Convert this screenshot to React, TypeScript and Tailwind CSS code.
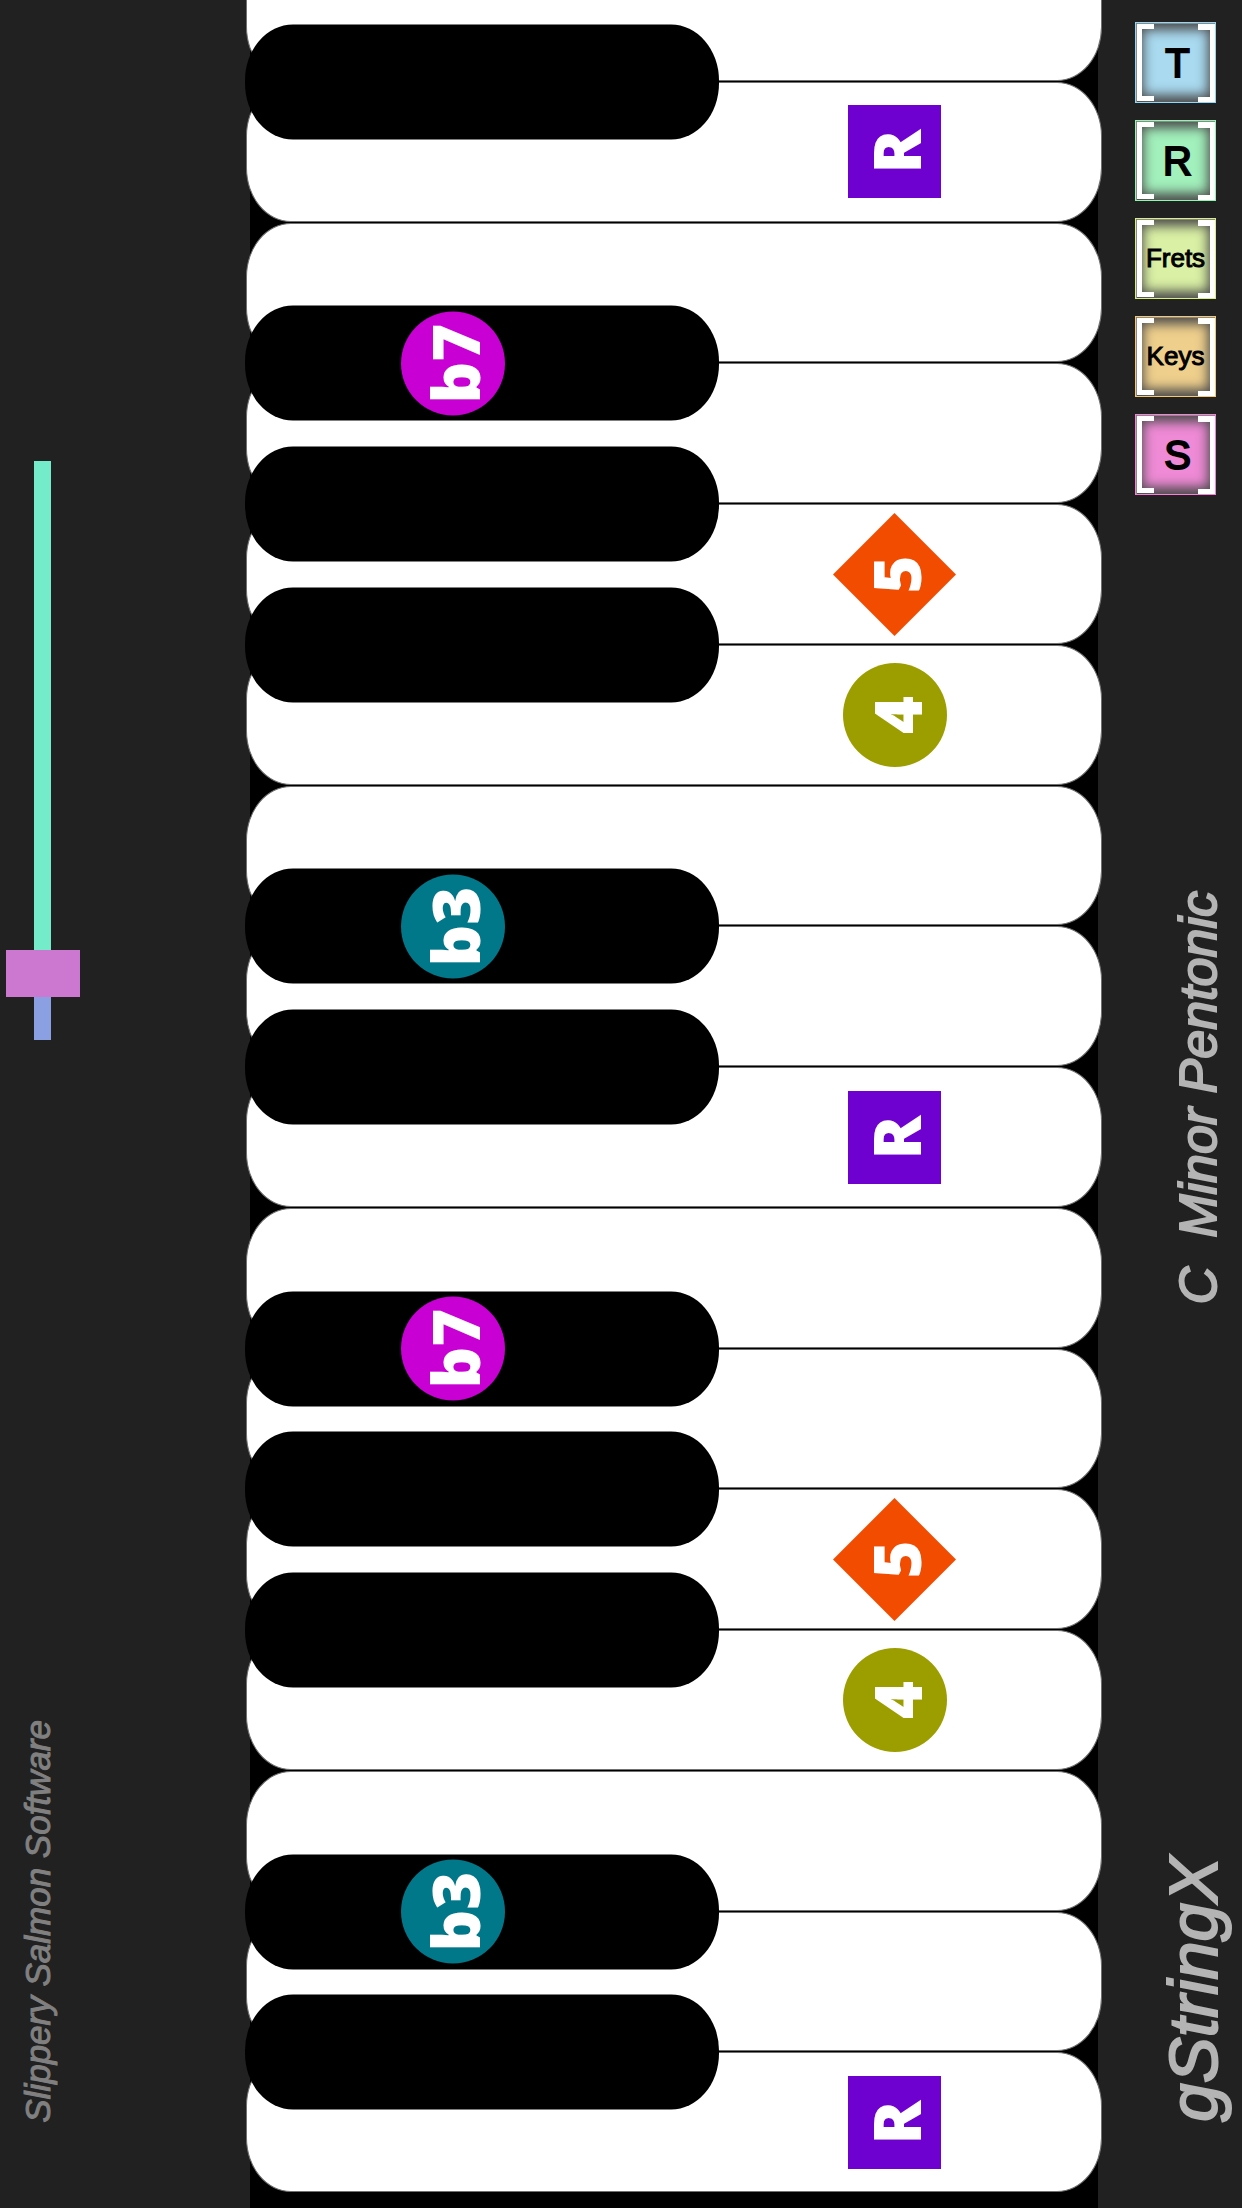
import React, { useState } from "react";

type Degree = "R" | "b3" | "4" | "5" | "b7";

interface PianoKey {
  degree?: Degree;
  sharp?: { degree?: Degree };
}

const keys: PianoKey[] = [
  { sharp: {} },
  { degree: "R" },
  { sharp: { degree: "b7" } },
  { sharp: {} },
  { degree: "5", sharp: {} },
  { degree: "4" },
  { sharp: { degree: "b3" } },
  { sharp: {} },
  { degree: "R" },
  { sharp: { degree: "b7" } },
  { sharp: {} },
  { degree: "5", sharp: {} },
  { degree: "4" },
  { sharp: { degree: "b3" } },
  { sharp: {} },
  { degree: "R" },
];

const markerShapes: Record<Degree, string> = {
  R: "size-[93px] bg-[#6e00d0]",
  b3: "size-[104px] rounded-full bg-[#00788a]",
  "4": "size-[104px] rounded-full bg-[#9c9e00]",
  "5": "size-[123px] bg-[#f24c00] [clip-path:polygon(50%_0,100%_50%,50%_100%,0_50%)]",
  b7: "size-[104px] rounded-full bg-[#c800d4]",
};

const largeLabel = "pl-1 text-[40px] [-webkit-text-stroke:2px]";
const smallLabel = "text-[26px] [-webkit-text-stroke:1px]";

const tools = [
  { label: "T", color: "border-[#8fd8f8] bg-[#a9daf0]", text: largeLabel },
  { label: "R", color: "border-[#8ff8b0] bg-[#a2f0bc]", text: largeLabel },
  { label: "Frets", color: "border-[#d8f080] bg-[#daf0a4]", text: smallLabel },
  { label: "Keys", color: "border-[#f8c870] bg-[#efcf8c]", text: smallLabel },
  { label: "S", color: "border-[#f880d8] bg-[#ef8ad6]", text: largeLabel },
];

function Marker({ degree }: { degree: Degree }) {
  return (
    <span
      className={`flex shrink-0 -rotate-90 items-center justify-center pt-1 font-['Open_Sans','Noto_Sans',sans-serif] text-[65px] leading-none font-extrabold text-white ${markerShapes[degree]}`}
    >
      {degree}
    </span>
  );
}

function Brackets() {
  return (
    <svg viewBox="0 0 81 81" className="absolute -inset-px size-[81px]" aria-hidden="true">
      <path d="M1.5 80V1.5H80" fill="none" stroke="#8a8a8a" />
      <path d="M2 2H19V7H7V74H19V79H2Z" fill="#fff" />
      <path d="M63 2H80V80H63V75H75V8H63Z" fill="#fff" />
    </svg>
  );
}

function Keyboard() {
  return (
    <ul className="-mx-1 flex h-full flex-col gap-px pb-4">
      {keys.map((key, i) => (
        <li
          key={i}
          className={`relative flex items-center border border-[#707070] bg-white [border-bottom-left-radius:45px_54px] [border-bottom-right-radius:45px_54px] ${
            i === 0
              ? "h-[81px] shrink-0 border-t-0"
              : "flex-1 [border-top-left-radius:45px_54px] [border-top-right-radius:45px_54px]"
          }`}
        >
          {key.degree && (
            <div className="ml-[51.7%] flex flex-1 justify-center">
              <Marker degree={key.degree} />
            </div>
          )}
          {key.sharp && (
            <div className="absolute -bottom-0.5 -left-0.5 z-10 flex h-[115px] w-[55.5%] translate-y-1/2 items-center rounded-[48px/56px] bg-black">
              {key.sharp.degree && (
                <div className="mr-[12.4%] flex flex-1 justify-center">
                  <Marker degree={key.sharp.degree} />
                </div>
              )}
            </div>
          )}
        </li>
      ))}
    </ul>
  );
}

export default function App() {
  const [volume, setVolume] = useState(8);

  return (
    <div className="flex h-screen overflow-hidden bg-[#212121] font-['Liberation_Sans',Arial,sans-serif]">
      <aside className="flex w-[250px] shrink-0 flex-col items-start justify-between pt-[461px] pb-[85px] pl-1.5">
        <input
          type="range"
          aria-label="Volume"
          min={0}
          max={100}
          value={volume}
          onChange={(e) => setVolume(Number(e.target.value))}
          className="h-[579px] w-[74px] appearance-none bg-[linear-gradient(#74ecca_89%,#8aa0e2_89%)] bg-[length:17px_100%] bg-[position:28px_0] bg-no-repeat [direction:rtl] [writing-mode:vertical-lr] [&::-webkit-slider-thumb]:h-[47px] [&::-webkit-slider-thumb]:w-[74px] [&::-webkit-slider-thumb]:appearance-none [&::-webkit-slider-thumb]:bg-[#cc78d0]"
        />
        <p className="ml-3 rotate-180 text-[35px] leading-10 whitespace-nowrap text-[#808080] italic [-webkit-text-stroke:1px] [writing-mode:vertical-rl]">
          Slippery Salmon Software
        </p>
      </aside>

      <main className="min-w-0 flex-1 bg-black">
        <Keyboard />
      </main>

      <aside className="flex w-36 shrink-0 flex-col items-end pt-[22px] pb-[86px]">
        <nav className="mr-[26px] flex flex-col gap-[17px]">
          {tools.map((tool) => (
            <button
              key={tool.label}
              type="button"
              className={`relative flex size-[81px] items-center justify-center border text-black shadow-[inset_0_0_12px_7px_#4a4a4a] ${tool.color} ${tool.text}`}
            >
              <Brackets />
              <span className="relative">{tool.label}</span>
            </button>
          ))}
        </nav>
        <h2 className="mt-[396px] mr-4 rotate-180 text-[52px] leading-14 whitespace-pre text-[#b4b4b4] italic [-webkit-text-stroke:2px] [writing-mode:vertical-rl]">
          {"C  Minor Pentonic"}
        </h2>
        <h1 className="mt-auto mr-3 rotate-180 text-[69px] leading-18 whitespace-nowrap text-[#b4b4b4] italic [-webkit-text-stroke:2px] [writing-mode:vertical-rl]">
          gStringX
        </h1>
      </aside>
    </div>
  );
}
